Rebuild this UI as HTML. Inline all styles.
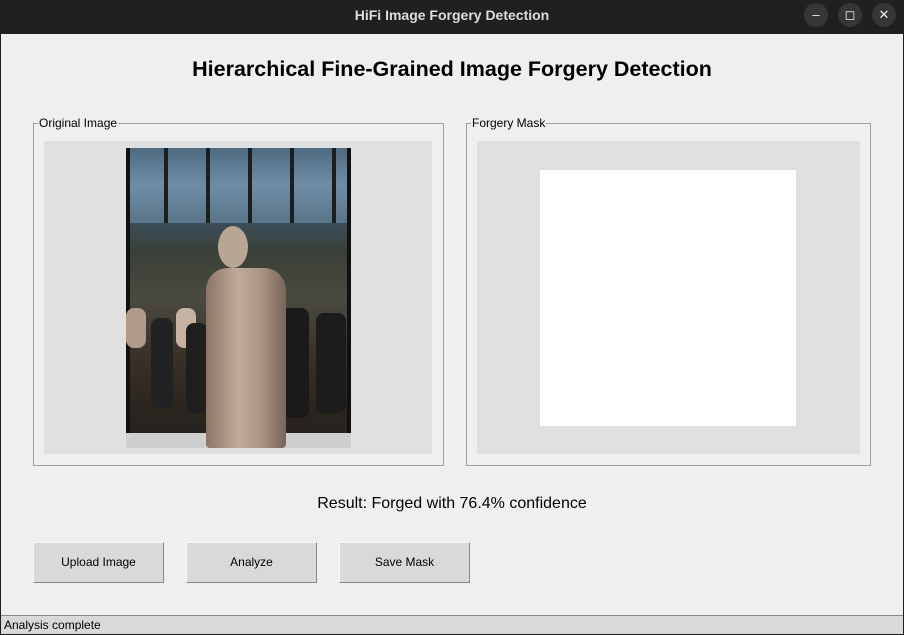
<!DOCTYPE html>
<html><head><meta charset="utf-8"><style>
*{margin:0;padding:0;box-sizing:border-box}
body{width:904px;height:635px;background:#1e1e1e;font-family:"Liberation Sans",sans-serif;position:relative;overflow:hidden}
.abs{position:absolute}
#title{left:0;top:0;width:904px;height:34px;background:#202020;border-radius:8px 8px 0 0;color:#ddd;font-weight:bold;font-size:14px;text-align:center;line-height:30px}
.wb{width:24px;height:24px;border-radius:12px;background:#363636;top:3px;color:#eee;font-size:13px;text-align:center;line-height:24px}
#content{left:1px;top:34px;width:902px;height:600px;background:#efefef}
h1{position:absolute;left:0;width:904px;top:57px;text-align:center;font-size:21.5px;font-weight:bold;color:#000}
.frame{border:1px solid #a0a0a0;top:123px;height:343px}
.lbl{position:absolute;top:-8px;left:4px;background:#efefef;font-size:12px;padding:0 1px;color:#000}
.grey{background:#e0e0e0}
.btn{top:542px;width:131px;height:41px;background:#d9d9d9;border:1px solid #f8f8f8;border-right-color:#888;border-bottom-color:#888;font-size:12px;text-align:center;line-height:39px;color:#000}
#status{left:1px;top:615px;width:902px;height:19px;background:#d9d9d9;border-top:1px solid #8a8a8a;font-size:12px;line-height:18px;padding-left:3px}
</style></head><body>
<div class="abs" id="title">HiFi Image Forgery Detection</div>
<div class="abs wb" style="left:804px">–</div>
<div class="abs wb" style="left:838px">◻</div>
<div class="abs wb" style="left:872px">✕</div>
<div class="abs" id="content"></div>
<h1>Hierarchical Fine-Grained Image Forgery Detection</h1>

<div class="abs frame" style="left:33px;width:411px"><span class="lbl">Original Image</span></div>
<div class="abs grey" style="left:44px;top:141px;width:388px;height:313px"></div>
<div class="abs" style="left:126px;top:148px;width:225px;height:300px;overflow:hidden;background:linear-gradient(180deg,#2e3b44 0%,#5a7488 8%,#3c5264 22%,#3a4038 35%,#4a4a40 50%,#3a3028 70%,#2a241e 88%,#222 100%)">
 <div class="abs" style="left:0;top:0;width:225px;height:75px;background:repeating-linear-gradient(90deg,transparent 0 38px,#1a1f22 38px 42px),linear-gradient(180deg,#4e6a80,#6f8ea6 50%,#5a7488)"></div>
 <div class="abs" style="left:0;top:0;width:4px;height:300px;background:#111"></div>
 <div class="abs" style="right:0;top:0;width:4px;height:300px;background:#111"></div>
 <div class="abs" style="left:0;top:160px;width:20px;height:40px;background:#b09a88;border-radius:8px"></div>
 <div class="abs" style="left:50px;top:160px;width:20px;height:40px;background:#c6b2a2;border-radius:8px"></div>
 <div class="abs" style="left:25px;top:170px;width:22px;height:90px;background:#222;border-radius:8px"></div>
 <div class="abs" style="left:60px;top:175px;width:22px;height:90px;background:#1e1e1e;border-radius:8px"></div>
 <div class="abs" style="left:155px;top:160px;width:28px;height:110px;background:#1a1a1a;border-radius:8px"></div>
 <div class="abs" style="left:190px;top:165px;width:30px;height:100px;background:#1c1c1c;border-radius:8px"></div>
 <div class="abs" style="left:0;top:285px;width:225px;height:15px;background:#cfcfcf"></div>
 <div class="abs" style="left:92px;top:78px;width:30px;height:42px;background:#b8a594;border-radius:50%"></div>
 <div class="abs" style="left:80px;top:120px;width:80px;height:180px;background:linear-gradient(90deg,#8a7566,#c2ab98 40%,#a89282 70%,#76655a);border-radius:22px 22px 4px 4px"></div>
</div>

<div class="abs frame" style="left:466px;width:405px"><span class="lbl">Forgery Mask</span></div>
<div class="abs grey" style="left:477px;top:141px;width:383px;height:313px"></div>
<div class="abs" style="left:540px;top:170px;width:256px;height:256px;background:#fff"></div>

<div class="abs" style="left:0;width:904px;top:495px;text-align:center;font-size:16px;color:#000">Result: Forged with 76.4% confidence</div>

<div class="abs btn" style="left:33px">Upload Image</div>
<div class="abs btn" style="left:186px">Analyze</div>
<div class="abs btn" style="left:339px">Save Mask</div>

<div class="abs" id="status">Analysis complete</div>
</body></html>
